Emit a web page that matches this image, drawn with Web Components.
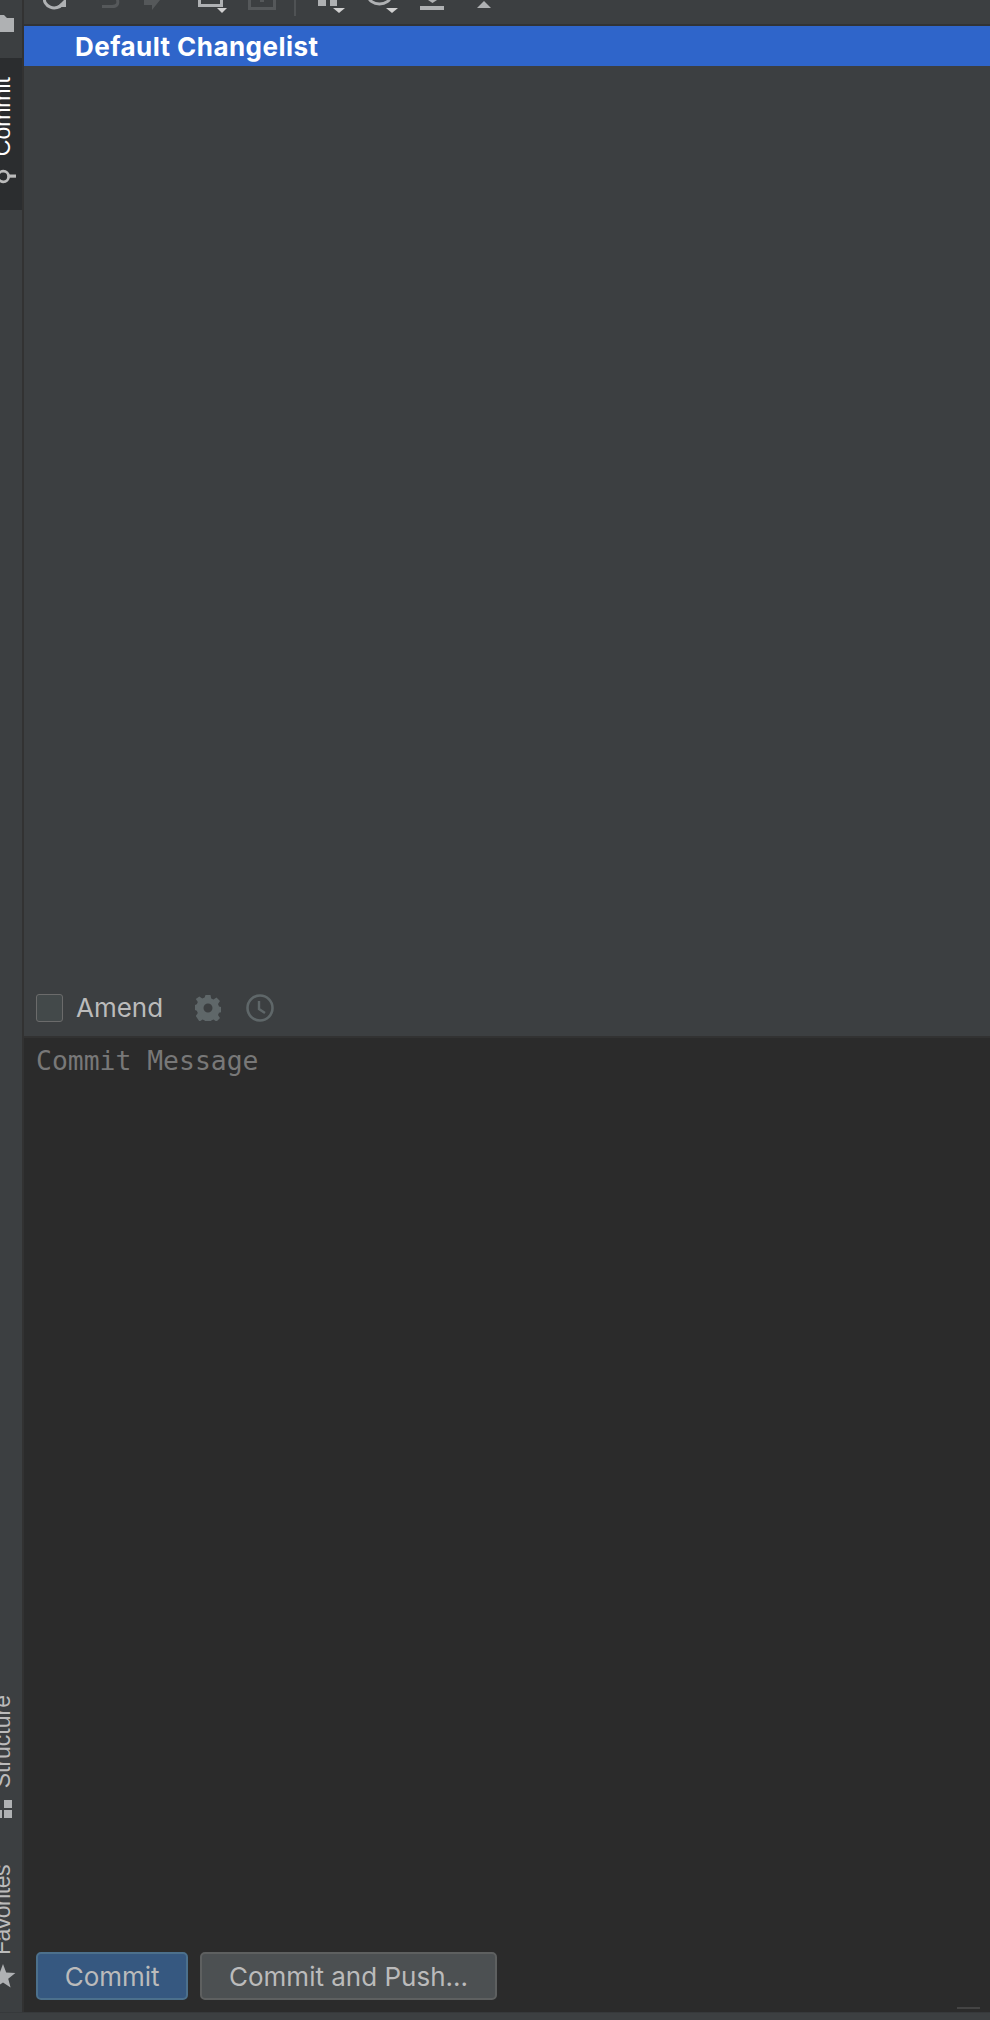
<!DOCTYPE html>
<html>
<head>
<meta charset="utf-8">
<style>
  html, body { margin: 0; height: 2020px; overflow: hidden; background: #3c3f41; }
  body { font-family: Inter, "Liberation Sans", sans-serif; color: #bbbbbb; }
</style>
</head>
<body>
<commit-window>
  <side-bar slot="side">
    <side-tab slot="top" label="Commit" active>
      <svg slot="icon" width="16" height="17" viewBox="0 0 16 17"><circle cx="3.300" cy="8.500" r="5.300" fill="none" stroke="#bbb" stroke-width="2.800"/><path d="M9 6.500h7v3.200H9z" fill="#bbb"/></svg>
    </side-tab>
    <side-tab slot="bottom" label="Structure">
      <svg slot="icon" width="12" height="18" viewBox="0 0 12 18"><path d="M4 0h8v8H4zM4 10h8v8H4zM0 10h2v8H0z" fill="#afb1b3"/></svg>
    </side-tab>
    <side-tab slot="bottom" label="Favorites" class="fav">
      <svg slot="icon" width="16" height="25" viewBox="0 0 16 25"><path d="M3 0L6.200 8.500 15.400 9 8.200 14.700 10.600 23.500 3 18.500-4.600 23.500-2.200 14.700-9.400 9-.2 8.500z" fill="#afb1b3"/></svg>
    </side-tab>
  </side-bar>
  <tool-bar slot="toolbar"></tool-bar>
  <change-list slot="list" label="Default Changelist"></change-list>
  <amend-row slot="amend"></amend-row>
  <message-editor slot="editor" placeholder="Commit Message">
    <action-button primary>Commit</action-button>
    <action-button>Commit and Push...</action-button>
  </message-editor>
</commit-window>

<script>
class CommitWindow extends HTMLElement {
  constructor() {
    super();
    this.attachShadow({ mode: 'open' });
    this.shadowRoot.innerHTML = `
      <style>
        :host { display: grid; grid-template-columns: 24px 1fr; grid-template-rows: 2012px 8px; width: 990px; height: 2020px; overflow: hidden; }
        .main { display: flex; flex-direction: column; min-width: 0; min-height: 0; }
        .strip { grid-column: 1 / 3; background: #3c3f41; border-top: 1px solid #36393b; box-sizing: border-box; }
      </style>
      <slot name="side"></slot>
      <div class="main">
        <slot name="toolbar"></slot>
        <slot name="list"></slot>
        <slot name="amend"></slot>
        <slot name="editor"></slot>
      </div>
      <div class="strip"></div>
    `;
  }
}

class SideBar extends HTMLElement {
  constructor() {
    super();
    this.attachShadow({ mode: 'open' });
    this.shadowRoot.innerHTML = `
      <style>
        :host { display: flex; flex-direction: column; box-sizing: border-box; width: 24px; background: #3c3f41; border-right: 2px solid #323232; overflow: hidden; }
        .folder { display: block; margin: 15px 0 26px; flex: none; }
        .spacer { flex: 1; }
      </style>
      <svg class="folder" width="14" height="17" viewBox="0 0 14 17"><path d="M0 0h4l3 3h7v14H0z" fill="#afb1b3"/></svg>
      <slot name="top"></slot>
      <div class="spacer"></div>
      <slot name="bottom"></slot>
    `;
  }
}

class SideTab extends HTMLElement {
  constructor() {
    super();
    this.attachShadow({ mode: 'open' });
    this.shadowRoot.innerHTML = `
      <style>
        :host { display: flex; flex-direction: column; align-items: flex-start; width: 22px; overflow: hidden; color: #bbbbbb; }
        :host([active]) { background: #2b2d2f; color: #ffffff; height: 152px; padding-top: 19px; box-sizing: border-box; }
        :host(:not([active])) { margin-bottom: 47px; }
        :host(.fav) { margin-bottom: 23px; }
        .label { writing-mode: vertical-rl; transform: rotate(180deg); font: 23px/23px "Liberation Sans", sans-serif; margin-left: -9px; white-space: nowrap; }
        :host(.fav) .label { letter-spacing: -0.5px; }
        ::slotted(svg) { display: block; margin-top: 12px; flex: none; }
        :host(.fav) ::slotted(svg) { margin-top: 9px; }
      </style>
      <span class="label"></span>
      <slot name="icon"></slot>
    `;
    this.shadowRoot.querySelector('.label').textContent = this.getAttribute('label');
  }
}

// the top of the toolbar is cut off by the window edge, so every icon hangs from the top of a 24px row
const TOOL_ICONS = [
  { w: 24, mx: 19, svg: '<path d="M1.500-3a10 9 0 0 0 18 7" fill="none" stroke="#afb1b3" stroke-width="3"/><path d="M23 -2v9h-9z" fill="#afb1b3"/>' },
  { w: 20, mx: 35, svg: '<path d="M15-2q3 8.500-5 8.500H0" fill="none" stroke="#55585a" stroke-width="3"/>' },
  { w: 18, mx: 22, svg: '<path d="M0 0h16L8 10V5H0z" fill="#55585a"/>' },
  { w: 30, mx: 36, svg: '<path d="M1.500 0v5.500h22V0" fill="none" stroke="#afb1b3" stroke-width="3"/><path d="M19 8h10l-5 5z" fill="#d0d0d0"/>' },
  { w: 28, mx: 20, svg: '<path d="M1.500 0v8.500h25V0" fill="none" stroke="#55585a" stroke-width="3"/><path d="M12 0h4v2h-4z" fill="#55585a"/>' },
  { w: 2,  mx: 18, svg: '<path d="M0 0h2v16H0z" fill="#4f5254"/>' },
  { w: 28, mx: 22, svg: '<path d="M0 0h8v6H0zM12 0h7v6h-7z" fill="#afb1b3"/><path d="M15 8h12l-6 5z" fill="#d0d0d0"/>' },
  { w: 32, mx: 21, svg: '<path d="M1.500-4a11 8 0 0 0 22 0" fill="none" stroke="#afb1b3" stroke-width="3"/><path d="M19 8h12l-6 5z" fill="#d0d0d0"/>' },
  { w: 24, mx: 21, svg: '<path d="M8 0h9l-4.500 3z" fill="#afb1b3"/><path d="M0 6h24v4H0z" fill="#afb1b3"/>' },
  { w: 14, mx: 33, svg: '<path d="M7 1l7 7H0z" fill="#afb1b3"/>' }
];

class ToolBar extends HTMLElement {
  constructor() {
    super();
    this.attachShadow({ mode: 'open' });
    const icons = TOOL_ICONS.map(icon =>
      `<svg style="margin-left:${icon.mx}px" width="${icon.w}" height="16" viewBox="0 0 ${icon.w} 16">${icon.svg}</svg>`
    ).join('');
    this.shadowRoot.innerHTML = `
      <style>
        :host { display: flex; align-items: flex-start; height: 26px; box-sizing: border-box; flex: none; background: #3c3f41; border-bottom: 2px solid #313335; overflow: hidden; }
        svg { display: block; flex: none; }
      </style>
      ${icons}
    `;
  }
}

class ChangeList extends HTMLElement {
  constructor() {
    super();
    this.attachShadow({ mode: 'open' });
    this.shadowRoot.innerHTML = `
      <style>
        :host { display: block; flex: 1; background: #3c3f41; min-height: 0; }
        .row { height: 40px; padding-left: 51px; background: #2f65ca; color: #fff; font: 700 26px/41px Inter, sans-serif; letter-spacing: 0.45px; }
      </style>
      <div class="row"></div>
    `;
    this.shadowRoot.querySelector('.row').textContent = this.getAttribute('label');
  }
}

class AmendRow extends HTMLElement {
  constructor() {
    super();
    this.attachShadow({ mode: 'open' });
    this.shadowRoot.innerHTML = `
      <style>
        :host { display: flex; align-items: center; flex: none; height: 52px; padding: 0 0 4px 12px; box-sizing: border-box; background: #3c3f41; }
        .box { width: 27px; height: 28px; box-sizing: border-box; border: 1.500px solid #6b6b6b; border-radius: 3px; background: #43494a; }
        .text { margin-left: 13px; font: 26px/28px Inter, sans-serif; color: #bbbbbb; }
        svg { display: block; flex: none; }
        .gear { margin-left: 32px; }
        .clock { margin-left: 25px; }
      </style>
      <span class="box"></span>
      <span class="text">Amend</span>
      <svg class="gear" width="26" height="26" viewBox="0 0 26 26">
        <path fill="#5f6769" fill-rule="evenodd" d="M10.500 0h5l.7 3.600 2.300 1 3-2 3.500 3.500-2 3 1 2.300 2.500.7v5l-2.500.7-1 2.300 2 3-3.500 3.500-3-2-2.300 1-.7 3.600h-5l-.7-3.600-2.300-1-3 2L.8 21.100l2-3-1-2.300L0 15v-5l1.800-.7 1-2.300-2-3L4.300 1.600l3 2 2.300-1zM13 8.500a4.500 4.500 0 1 0 0 9 4.500 4.500 0 0 0 0-9z"/>
      </svg>
      <svg class="clock" width="28" height="28" viewBox="0 0 28 28">
        <circle cx="14" cy="14" r="12.500" fill="none" stroke="#5f6769" stroke-width="2.600"/>
        <path d="M13 7v8l6 4" fill="none" stroke="#5f6769" stroke-width="2.400"/>
      </svg>
    `;
  }
}

class MessageEditor extends HTMLElement {
  constructor() {
    super();
    this.attachShadow({ mode: 'open' });
    this.shadowRoot.innerHTML = `
      <style>
        :host { display: flex; flex-direction: column; flex: none; height: 976px; box-sizing: border-box; background: #2b2b2b; border-top: 2px solid #323232; padding: 8px 12px 12px; position: relative; }
        .hint { font: 26.400px/30px "DejaVu Sans Mono", monospace; color: #787878; flex: 1; }
        .actions { display: flex; gap: 12px; }
        .mark { position: absolute; right: 10px; bottom: 3px; width: 23px; height: 2px; background: #444444; }
      </style>
      <div class="hint"></div>
      <div class="actions"><slot></slot></div>
      <div class="mark"></div>
    `;
    this.shadowRoot.querySelector('.hint').textContent = this.getAttribute('placeholder');
  }
}

class ActionButton extends HTMLElement {
  constructor() {
    super();
    this.attachShadow({ mode: 'open' });
    this.shadowRoot.innerHTML = `
      <style>
        :host { display: block; box-sizing: border-box; height: 48px; padding: 0 26.700px; border: 2px solid #5e6060; border-radius: 5px; background: #4c5052; color: #bbbbbb; font: 26px/45px Inter, sans-serif; white-space: nowrap; }
        :host([primary]) { border-color: #4c708c; background: #365880; }
      </style>
      <slot></slot>
    `;
  }
}

customElements.define('commit-window', CommitWindow);
customElements.define('side-bar', SideBar);
customElements.define('side-tab', SideTab);
customElements.define('tool-bar', ToolBar);
customElements.define('change-list', ChangeList);
customElements.define('amend-row', AmendRow);
customElements.define('message-editor', MessageEditor);
customElements.define('action-button', ActionButton);
</script>
</body>
</html>
